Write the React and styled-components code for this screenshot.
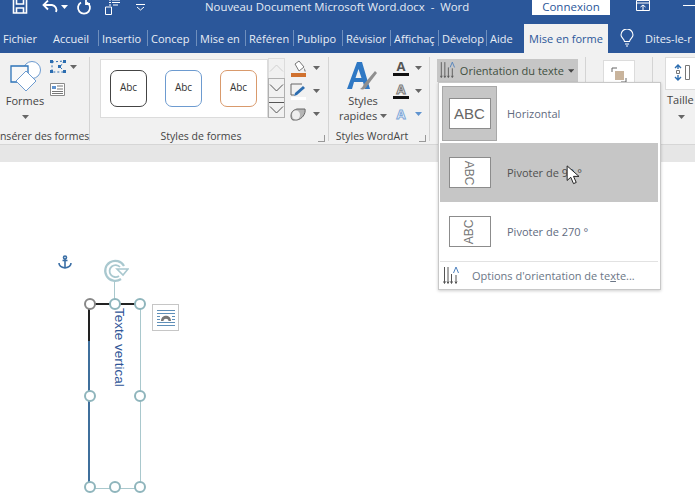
import React from "react"
import styled, { createGlobalStyle } from "styled-components"

const tabs = [
  { label: "Fichier", w: 50 },
  { label: "Accueil", w: 48 },
  { label: "Insertio", w: 49 },
  { label: "Concep", w: 49 },
  { label: "Mise en", w: 49 },
  { label: "Référen", w: 48 },
  { label: "Publipo", w: 49 },
  { label: "Révisior", w: 48 },
  { label: "Affichaç", w: 48 },
  { label: "Dévelop", w: 48 },
  { label: "Aide", w: 36 },
]

function Caret({ color = "#666" }) {
  return (
    <svg width="7" height="4" viewBox="0 0 7 4"><path d="M0 0h7L3.500 4z" fill={color} /></svg>
  )
}

function AbcSwatch({ color }) {
  return <Swatch $color={color}>Abc</Swatch>
}

function Handle({ x, y, dark }) {
  return <ShapeHandle $x={x} $y={y} $dark={dark} />
}

export default function App() {
  return (
    <>
      <Global />
      <Page>
        <TitleBar>
          <Qat>
            <svg width="16" height="14" viewBox="0 0 16 14" fill="none" stroke="#fff" strokeWidth="1.600">
              <path d="M1.500 0v13h13V0" />
              <path d="M4.500 0v4h7V0M4.500 13V8h7v5" />
            </svg>
            <svg width="18" height="14" viewBox="0 0 18 14" fill="none" stroke="#fff" strokeWidth="1.800">
              <path d="M2 5h8a5 5 0 0 1 4 7" />
              <path d="M6 .5 1.500 5 6 9.500" />
            </svg>
            <Caret color="#fff" />
            <svg width="16" height="15" viewBox="0 0 16 15" fill="none" stroke="#fff" strokeWidth="1.800">
              <path d="M5 2.500a6 6 0 1 0 6 0" />
              <path d="M10 0v4h4" />
            </svg>
            <svg width="17" height="16" viewBox="0 0 17 16" fill="none" stroke="#fff" strokeWidth="1">
              <path d="M1.500 8h6v7.500h-6zM5 1h2M5 3.500h2M5 6h2M8 1h8M8 3.500h8M9 6h5" />
            </svg>
            <QatMenu>
              <svg width="9" height="7" viewBox="0 0 9 7" fill="none" stroke="#fff" strokeWidth="1">
                <path d="M0 .5h9M1 3l3.500 3L8 3" />
              </svg>
            </QatMenu>
          </Qat>
          <DocTitle>Nouveau Document Microsoft Word.docx&nbsp; -&nbsp; Word</DocTitle>
          <Connexion>Connexion</Connexion>
          <WinButton>
            <svg width="14" height="11" viewBox="0 0 14 11" fill="none" stroke="#fff">
              <path d="M.5.500h13v10H.5zM.5 3h13M4.500 7 7 5l2.500 2M7 5v5" />
            </svg>
          </WinButton>
          <MinusMark />
        </TitleBar>

        <TabBar>
          {tabs.map((t, i) => (
            <Tab key={t.label} $w={t.w} $sep={i > 1}>{t.label}</Tab>
          ))}
          <ActiveTab>Mise en forme</ActiveTab>
          <TellMe>
            <svg width="14" height="18" viewBox="0 0 14 18" fill="none" stroke="#fff" strokeWidth="1.100">
              <path d="M4.500 12.500C4 10 1 8.500 1 6a6 6 0 0 1 12 0c0 2.500-3 4-3.500 6.500zM5 15h4M6 17h2" />
            </svg>
            <span>Dites-le-r</span>
          </TellMe>
        </TabBar>

        <Ribbon>
          <Group $w={90}>
            <GroupBody>
              <BigButton>
                <svg width="32" height="32" viewBox="0 0 32 32" fill="none">
                  <circle cx="23" cy="10" r="8.500" fill="#fff" stroke="#6d9bd0" />
                  <path d="M2 6h17v16H2z" fill="#f8f8f8" stroke="#2d73b8" strokeWidth="1.300" />
                  <path d="M17 11 27 21 17 31 7 21z" fill="#fff" stroke="#6d9bd0" />
                </svg>
                <Label>Formes</Label>
                <Caret />
              </BigButton>
              <SmallStack>
                <EditPoints>
                  <svg width="17" height="14" viewBox="0 0 17 14" fill="none" stroke="#2c6db0">
                    <path d="M2 2 14 1 10 7 15 12 2 12z" strokeDasharray="2 2" />
                    <path d="M0 0h3v3H0zM13 0h3v3h-3zM8 5h3v3H8zM0 10h3v3H0zM13 10h3v3h-3z" fill="#2c6db0" stroke="none" />
                  </svg>
                  <Caret />
                </EditPoints>
                <svg width="15" height="13" viewBox="0 0 15 13" fill="#fff" stroke="#8a8a8a">
                  <path d="M.5.500h14v12H.5z" />
                  <path d="M2 3h4v3H2z" fill="#5f93cf" stroke="none" />
                  <path d="M7 3h6M7 6h6M2 8.500h11M2 10.500h11" stroke="#777" />
                </svg>
              </SmallStack>
            </GroupBody>
            <GroupName $indent={-3}>Insérer des formes</GroupName>
          </Group>

          <Group $w={239}>
            <GroupBody>
              <StyleGallery>
                <AbcSwatch color="#444" />
                <AbcSwatch color="#6d9bd0" />
                <AbcSwatch color="#d99a6c" />
              </StyleGallery>
              <Spinner>
                <SpinButton>
                  <svg width="15" height="8" viewBox="0 0 15 8" fill="none" stroke="#d0d0d0"><path d="M1 7.500 7.500 1 14 7.500" /></svg>
                </SpinButton>
                <SpinButton $on>
                  <svg width="15" height="8" viewBox="0 0 15 8" fill="none" stroke="#555"><path d="M1 .5 7.500 7 14 .5" /></svg>
                </SpinButton>
                <SpinButton $on>
                  <svg width="15" height="12" viewBox="0 0 15 12" fill="none" stroke="#555"><path d="M0 .5h15M1 4.500l6.500 6.500L14 4.500" /></svg>
                </SpinButton>
              </Spinner>
              <SmallStack $pad>
                <ColorTool>
                  <svg width="17" height="17" viewBox="0 0 17 17">
                    <path d="M5 4 9 1l5 6-5 4z" fill="#fff" stroke="#777" />
                    <path d="M14 8c1 1.500 2 2.500 1.500 3.500S14 11 14 8z" fill="#777" />
                    <path d="M1 13h15v4H1z" fill="#d0712f" />
                  </svg>
                  <Caret />
                </ColorTool>
                <ColorTool>
                  <svg width="17" height="17" viewBox="0 0 17 17" fill="none">
                    <path d="M12 1H1v11h3" stroke="#666" />
                    <path d="M5 10 13 3l2 2-8 7-3 1z" fill="#2c6db0" />
                    <path d="M1 14h15v3H1z" fill="#fff" />
                  </svg>
                  <Caret />
                </ColorTool>
                <ColorTool>
                  <svg width="17" height="14" viewBox="0 0 17 14">
                    <path d="M1 9c0-4 2-6 6-7h8c1 5-3 10-8 11H3C2 13 1 11 1 9z" fill="#b5b5b5" stroke="#666" />
                    <ellipse cx="6" cy="8" rx="4" ry="4.500" fill="#eee" />
                  </svg>
                  <Caret />
                </ColorTool>
              </SmallStack>
            </GroupBody>
            <GroupName $shift={16}>Styles de formes<Launcher /></GroupName>
          </Group>

          <Group $w={101}>
            <GroupBody>
              <BigButton $w={52} $left={8}>
                <svg width="32" height="32" viewBox="0 0 32 32">
                  <path d="M0 29 10 2h5l8 27h-5l-2-7H7l-2 7zM8.500 18h6L11.500 9z" fill="#2f78c4" />
                  <path d="M17 24 28 11l2 2-10 13c-1 3-4 4-7 3 2-1 3-3 4-5z" fill="#8f8f8f" />
                </svg>
                <Label>Styles</Label>
                <Label>rapides <Caret /></Label>
              </BigButton>
              <SmallStack $pad $left={4}>
                <ColorTool>
                  <TextGlyph>A</TextGlyph><Caret />
                </ColorTool>
                <ColorTool>
                  <TextGlyph $hollow>A</TextGlyph><Caret />
                </ColorTool>
                <ColorTool>
                  <TextGlyph $glow>A</TextGlyph><Caret color="#5f93cf" />
                </ColorTool>
              </SmallStack>
            </GroupBody>
            <GroupName $shift={14}>Styles WordArt<Launcher /></GroupName>
          </Group>

          <Group $w={156}>
            <OrientationButton>
              <svg width="18" height="19" viewBox="0 0 18 19" fill="none" stroke="#555">
                <path d="M1.500 0v17M5.500 0v17M9.500 6v11" />
                <path d="M.5 15.500l1 2 1-2M4.500 15.500l1 2 1-2M8.500 15.500l1 2 1-2M14 7v10M13 15.500l1 2 1-2" />
                <path d="M11.500 6 14 0l2.500 6" stroke="#4d80bd" />
              </svg>
              <span>Orientation du texte</span>
              <Caret color="#444" />
            </OrientationButton>
          </Group>

          <Group $w={67}>
            <GroupBody $center>
              <ArrangeBox>
                <svg width="16" height="16" viewBox="0 0 16 16" fill="none">
                  <path d="M1 5V1h5M15 11v4h-5" stroke="#666" />
                  <path d="M4 4h9v9H4z" fill="#c9b49c" />
                </svg>
              </ArrangeBox>
            </GroupBody>
          </Group>

          <SizeGroup>
            <SizeBox>
              <svg width="17" height="17" viewBox="0 0 17 17" fill="none" stroke="#777">
                <path d="M11.500 1.500h4v14h-4zM2.500 6.500h3v3h-3z" />
                <path d="M1 4l3-3 3 3M1 13l3 3 3-3M4 1v4M4 11v5" stroke="#2c6db0" strokeWidth="1.400" />
              </svg>
            </SizeBox>
            <Label>Taille</Label>
            <Caret />
          </SizeGroup>
        </Ribbon>

        <RulerStrip />

        <Document>
          <Anchor>
            <svg width="14" height="14" viewBox="0 0 14 14" fill="none" stroke="#3a6ea5" strokeWidth="1.600">
              <circle cx="7" cy="2.500" r="1.500" />
              <path d="M7 4v9M4.500 5.500h5M1 8c0 3 3 4.500 6 5 3-.5 6-2 6-5" />
            </svg>
          </Anchor>
          <RotateHandle>
            <svg width="26" height="26" viewBox="0 0 26 26" fill="none" stroke="#a9c8cf" strokeWidth="2.200">
              <path d="M18 22a10 10 0 1 1 3-13" />
              <path d="M16 19a6 6 0 1 1 1-9" strokeWidth="1.800" />
              <path d="M14 12h11l-5 6z" fill="#fff" strokeWidth="1.600" />
            </svg>
          </RotateHandle>
          <RotateStem />
          <TextBox>
            <BoxText>Texte vertical</BoxText>
            <Handle x={0} y={0} dark />
            <Handle x={50} y={0} />
            <Handle x={100} y={0} />
            <Handle x={0} y={50} />
            <Handle x={100} y={50} />
            <Handle x={0} y={100} />
            <Handle x={50} y={100} />
            <Handle x={100} y={100} />
          </TextBox>
          <LayoutOptions>
            <svg width="20" height="18" viewBox="0 0 20 18" fill="none" stroke="#5f8fb8">
              <path d="M1 1.500h18M1 4.500h18M1 13.500h18M1 16.500h18M1 7.500h3M16 7.500h3M1 10.500h3M16 10.500h3" />
              <path d="M5 12c0-7 10-7 10 0h-2.500c0-3-5-3-5 0z" fill="#777" stroke="none" />
            </svg>
          </LayoutOptions>
        </Document>

        <Menu>
          <MenuRow>
            <MenuIconCell $selected><AbcBox>ABC</AbcBox></MenuIconCell>
            <MenuLabel>Horizontal</MenuLabel>
          </MenuRow>
          <MenuRow $hover>
            <MenuIconCell><AbcBox $rot={90}><span>ABC</span></AbcBox></MenuIconCell>
            <MenuLabel $hover>Pivoter de 90 °</MenuLabel>
            <Cursor>
              <svg width="15" height="20" viewBox="0 0 16 22">
                <path d="M1 1v16l4-3.500 3 7 3-1.300-3-6.700h6z" fill="#fff" stroke="#222" strokeWidth="1.100" />
              </svg>
            </Cursor>
          </MenuRow>
          <MenuRow>
            <MenuIconCell><AbcBox $rot={270}><span>ABC</span></AbcBox></MenuIconCell>
            <MenuLabel>Pivoter de 270 °</MenuLabel>
          </MenuRow>
          <MenuFooter>
            <svg width="16" height="18" viewBox="0 0 16 18" fill="none" stroke="#555">
              <path d="M1.500 0v16M5 0v16M8.500 7v9M13 8v8" />
              <path d="M.5 14.500l1 2 1-2M4 14.500l1 2 1-2M7.500 14.500l1 2 1-2M12 14.500l1 2 1-2" />
              <path d="M10.500 6 13 0l2.500 6" stroke="#4d80bd" />
            </svg>
            <span>Options d'orientation de te<u>x</u>te...</span>
          </MenuFooter>
        </Menu>
      </Page>
    </>
  )
}

const Global = createGlobalStyle`
  html, body { margin: 0; padding: 0; background: #fff; }
  body { font-family: "Open Sans", "Liberation Sans", sans-serif; }
`

const Page = styled.div`
  position: relative;
  width: 695px;
  height: 502px;
  overflow: hidden;
  display: flex;
  flex-direction: column;
`

const TitleBar = styled.div`
  height: 27px;
  flex: none;
  background: #2b579a;
  display: flex;
  align-items: flex-start;
  color: #fff;
  overflow: hidden;
`

const Qat = styled.div`
  width: 205px;
  flex: none;
  padding: 0 0 0 12px;
  box-sizing: border-box;
  height: 14px;
  display: flex;
  align-items: center;
  gap: 6px;
  svg:nth-child(1) { margin-right: 8px; }
  svg:nth-child(3) { margin-left: -5px; margin-right: 2px; }
  svg:nth-child(4) { margin-right: 6px; }
`

const QatMenu = styled.div`
  margin-left: 9px;
  display: flex;
`

const DocTitle = styled.div`
  width: 327px;
  flex: none;
  font-size: 11.400px;
  line-height: 14px;
  color: #e4ebf5;
  white-space: nowrap;
`

const Connexion = styled.div`
  width: 78px;
  height: 15px;
  flex: none;
  background: #fff;
  color: #2b579a;
  font-size: 11.500px;
  line-height: 13px;
  text-align: center;
`

const WinButton = styled.div`
  margin-left: 26px;
  display: flex;
`

const MinusMark = styled.div`
  margin: 5px 0 0 33px;
  width: 12px;
  height: 1px;
  background: #fff;
`

const TabBar = styled.div`
  height: 26px;
  flex: none;
  background: #2b579a;
  display: flex;
  align-items: stretch;
`

const Tab = styled.div`
  flex: none;
  width: ${(p) => p.$w}px;
  box-sizing: border-box;
  padding-left: ${(p) => (p.$sep ? 4 : 3)}px;
  font-size: 11px;
  line-height: 24px;
  color: #e9eef6;
  white-space: nowrap;
  overflow: hidden;
  position: relative;
  &::after {
    content: "";
    display: ${(p) => (p.$sep ? "block" : "none")};
    position: absolute;
    left: 0;
    top: 3px;
    bottom: 7px;
    width: 1px;
    background: #6f8fbd;
  }
`

const ActiveTab = styled.div`
  flex: none;
  width: 84px;
  margin: -3px 0 0 2px;
  box-sizing: border-box;
  background: #f1f1f1;
  color: #2b579a;
  font-size: 11px;
  line-height: 24px;
  text-align: center;
  padding-top: 3px;
`

const TellMe = styled.div`
  display: flex;
  align-items: center;
  gap: 11px;
  padding: 0 0 4px 12px;
  color: #e9eef6;
  font-size: 11px;
  white-space: nowrap;
`

const Ribbon = styled.div`
  height: 91px;
  flex: none;
  background: #f1f1f1;
  display: flex;
  box-sizing: border-box;
  padding: 4px 0 3px;
  overflow: hidden;
`

const Group = styled.div`
  flex: none;
  width: ${(p) => p.$w}px;
  box-sizing: border-box;
  display: flex;
  flex-direction: column;
  border-right: 1px solid #d4d4d4;
`

const GroupBody = styled.div`
  flex: 1;
  display: flex;
  justify-content: ${(p) => (p.$center ? "center" : "flex-start")};
  min-height: 0;
`

const GroupName = styled.div`
  position: relative;
  height: 15px;
  margin-bottom: -3px;
  box-sizing: border-box;
  padding-right: ${(p) => p.$shift || 0}px;
  font-size: 10.500px;
  line-height: 15px;
  color: #444;
  text-align: center;
  white-space: nowrap;
  text-indent: ${(p) => p.$indent || 0}px;
`

const Launcher = styled.span`
  position: absolute;
  right: 3px;
  bottom: 2px;
  width: 6px;
  height: 6px;
  border-left: 1px solid #999;
  border-bottom: 1px solid #999;
  transform: scaleX(-1);
`

const BigButton = styled.div`
  flex: none;
  width: ${(p) => p.$w || 50}px;
  margin-left: ${(p) => p.$left || 0}px;
  display: flex;
  flex-direction: column;
  align-items: center;
  gap: 2px;
  padding-top: 3px;
  > svg:last-child { margin-top: 6px; }
`

const Label = styled.div`
  font-size: 11px;
  line-height: 13px;
  color: #444;
  white-space: nowrap;
  svg { vertical-align: 2px; }
`

const SmallStack = styled.div`
  display: flex;
  flex-direction: column;
  gap: ${(p) => (p.$pad ? "5px" : "9px")};
  padding-top: ${(p) => (p.$pad ? "2px" : "3px")};
  margin-left: ${(p) => p.$left || 0}px;
`

const EditPoints = styled.div`
  display: flex;
  align-items: center;
  gap: 3px;
`

const StyleGallery = styled.div`
  flex: none;
  margin: 2px 0 0 10px;
  width: 168px;
  height: 59px;
  background: #fff;
  border: 1px solid #dcdcdc;
  box-sizing: border-box;
  display: flex;
  align-items: center;
  gap: 18px;
  padding-left: 9px;
`

const Swatch = styled.div`
  width: 37px;
  height: 37px;
  box-sizing: border-box;
  border: 1.500px solid ${(p) => p.$color};
  border-radius: 7px;
  font-size: 10px;
  line-height: 32px;
  text-align: center;
  color: #333;
`

const Spinner = styled.div`
  flex: none;
  width: 17px;
  height: 59px;
  margin: 2px 5px 0 0;
  display: flex;
  flex-direction: column;
  background: #f1f1f1;
`

const SpinButton = styled.div`
  flex: 1;
  display: flex;
  align-items: center;
  justify-content: center;
  box-sizing: border-box;
  border: 1px solid ${(p) => (p.$on ? "#b0b0b0" : "#dcdcdc")};
  margin-top: -1px;
`

const ColorTool = styled.div`
  display: flex;
  align-items: center;
  gap: 6px;
  height: 18px;
`

const TextGlyph = styled.span`
  width: 16px;
  display: block;
  box-sizing: border-box;
  font-size: 13px;
  font-weight: 700;
  line-height: 13px;
  text-align: center;
  color: ${(p) => (p.$glow ? "#fff" : p.$hollow ? "#f1f1f1" : "#555")};
  -webkit-text-stroke: ${(p) => (p.$glow ? "1px #7fa8d8" : p.$hollow ? "1px #777" : "0")};
  border-bottom: ${(p) => (p.$glow ? "none" : "3px solid #111")};
`

const OrientationButton = styled.div`
  margin: 2px 0 0 7px;
  width: 141px;
  height: 23px;
  flex: none;
  box-sizing: border-box;
  background: #c6c6c6;
  display: flex;
  align-items: center;
  gap: 4px;
  padding: 0 4px 0 3px;
  font-size: 11px;
  color: #3f4f3f;
  white-space: nowrap;
  span { flex: none; }
`

const ArrangeBox = styled.div`
  width: 32px;
  height: 36px;
  margin-top: 3px;
  background: #fff;
  border: 1px solid #dcdcdc;
  box-sizing: border-box;
  display: flex;
  justify-content: center;
  padding-top: 6px;
`

const SizeGroup = styled.div`
  flex: none;
  width: 42px;
  padding-left: 12px;
  box-sizing: border-box;
  display: flex;
  flex-direction: column;
  align-items: flex-start;
  gap: 3px;
  > svg:last-child { margin: 6px 0 0 13px; }
  > div:nth-child(2) { margin-left: 2px; }
`

const SizeBox = styled.div`
  flex: none;
  width: 34px;
  height: 33px;
  background: #fff;
  border: 1px solid #dcdcdc;
  box-sizing: border-box;
  display: flex;
  justify-content: center;
  padding-top: 6px;
`

const RulerStrip = styled.div`
  height: 18px;
  flex: none;
  background: #e6e6e6;
  border-top: 1px solid #d6d6d6;
  box-sizing: border-box;
`

const Document = styled.div`
  position: relative;
  flex: 1;
  background: #fff;
`

const Anchor = styled.div`
  position: absolute;
  left: 58px;
  top: 90px;
`

const RotateHandle = styled.div`
  position: absolute;
  left: 103px;
  top: 95px;
  display: flex;
`

const RotateStem = styled.div`
  position: absolute;
  left: 114px;
  top: 120px;
  width: 1px;
  height: 20px;
  background: #a9c8cd;
`

const TextBox = styled.div`
  position: absolute;
  left: 88px;
  top: 141px;
  width: 53px;
  height: 186px;
  box-sizing: border-box;
  border: 1.500px solid #a9c8cd;
  border-left: 2px solid #3f6f9c;
  border-top: 2px solid #222;
  &::before {
    content: "";
    position: absolute;
    left: -2px;
    top: 0;
    width: 2px;
    height: 36px;
    background: #222;
  }
`

const BoxText = styled.div`
  writing-mode: vertical-rl;
  font-family: "Liberation Sans", sans-serif;
  font-size: 13.500px;
  line-height: 14px;
  color: #2f5597;
  position: absolute;
  left: 22px;
  top: 3px;
  white-space: nowrap;
`

const ShapeHandle = styled.div`
  position: absolute;
  left: ${(p) => p.$x}%;
  top: ${(p) => p.$y}%;
  width: 12px;
  height: 12px;
  margin: -7px 0 0 -6px;
  box-sizing: border-box;
  border-radius: 50%;
  background: #fff;
  border: 2px solid ${(p) => (p.$dark ? "#888" : "#8fb5bc")};
`

const LayoutOptions = styled.div`
  position: absolute;
  left: 152px;
  top: 142px;
  width: 27px;
  height: 27px;
  box-sizing: border-box;
  background: #fff;
  border: 1px solid #c6c6c6;
  display: flex;
  align-items: center;
  justify-content: center;
`

const Menu = styled.div`
  position: absolute;
  left: 438px;
  top: 82px;
  width: 223px;
  height: 208px;
  box-sizing: border-box;
  background: #fff;
  border: 1px solid #c8c8c8;
  box-shadow: 0 1px 3px rgba(0, 0, 0, 0.2);
  display: flex;
  flex-direction: column;
  padding: 1px 2px 0 1px;
`

const MenuRow = styled.div`
  position: relative;
  flex: none;
  height: 59px;
  display: flex;
  align-items: center;
  background: ${(p) => (p.$hover ? "#c6c6c6" : "transparent")};
`

const MenuIconCell = styled.div`
  flex: none;
  width: 55px;
  height: 55px;
  margin-left: 2px;
  box-sizing: border-box;
  display: flex;
  align-items: center;
  justify-content: center;
  background: ${(p) => (p.$selected ? "#c6c6c6" : "transparent")};
  border: 1px solid ${(p) => (p.$selected ? "#a8a8a8" : "transparent")};
`

const AbcBox = styled.div`
  width: 42px;
  height: 31px;
  box-sizing: border-box;
  background: #fff;
  border: 1px solid #8c8c8c;
  color: #666;
  font-size: 15px;
  line-height: 29px;
  text-align: center;
  font-family: "Liberation Sans", sans-serif;
  display: flex;
  align-items: center;
  justify-content: center;
  span {
    display: block;
    font-size: 12px;
    line-height: 12px;
    color: #777;
    transform: rotate(${(p) => p.$rot || 0}deg);
  }
`

const MenuLabel = styled.div`
  margin-left: 10px;
  font-size: 11px;
  color: ${(p) => (p.$hover ? "#505050" : "#5f6b80")};
`

const Cursor = styled.div`
  position: absolute;
  left: 126px;
  top: 22px;
  display: flex;
`

const MenuFooter = styled.div`
  flex: 1;
  border-top: 1px solid #e2e2e2;
  display: flex;
  align-items: center;
  gap: 13px;
  padding-left: 3px;
  font-size: 11px;
  color: #6b7686;
  white-space: nowrap;
`
